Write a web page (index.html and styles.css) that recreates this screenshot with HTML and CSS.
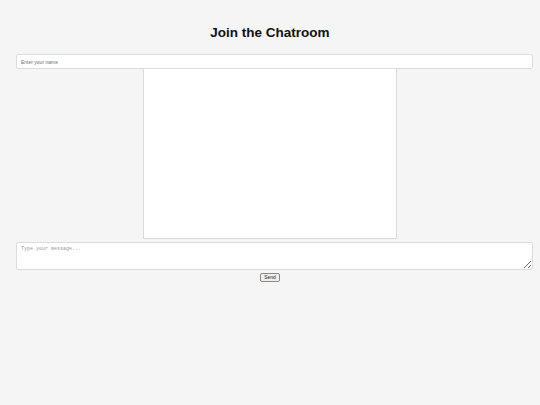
FILE: index.html
```html
<!DOCTYPE html>
<html>
<head>
<meta charset="utf-8">
<link rel="stylesheet" href="styles.css">
</head>
<body>
<div class="page">
  <h1 class="title">Join the Chatroom</h1>
  <input class="name" type="text" placeholder="Enter your name">
  <div class="chat"></div>
  <textarea class="msg" placeholder="Type your message..."></textarea>
  <div class="actions"><button class="send">Send</button></div>
</div>
</body>
</html>
```
FILE: styles.css
```css
html, body {
  margin: 0;
  padding: 0;
  background: #f5f5f5;
  font-family: "Liberation Sans", Arial, sans-serif;
}
.page {
  padding: 0 16px;
  display: flex;
  flex-direction: column;
  align-items: flex-start;
}
.title {
  align-self: stretch;
  margin: 25px 0 0;
  height: 29px;
  font-size: 13.5px;
  line-height: 16px;
  text-align: center;
  color: #111;
  font-weight: bold;
}
.name {
  box-sizing: border-box;
  width: calc(100% + 9px);
  height: 15px;
  margin: 0;
  padding: 0 4px;
  border: 1px solid #dcdcdc;
  border-radius: 2px;
  background: #fff;
  font-family: "Liberation Sans", Arial, sans-serif;
  font-size: 5px;
  outline: none;
}
.name::placeholder { color: #6f6f6f; }
.chat {
  box-sizing: border-box;
  align-self: center;
  width: 254px;
  height: 169.5px;
  background: #fff;
  border: 1px solid #dadada;
  border-top: none;
}
.msg {
  box-sizing: border-box;
  display: block;
  width: calc(100% + 9px);
  height: 28px;
  margin: 3.5px 0 0;
  padding: 3px 4px;
  border: 1px solid #dcdcdc;
  border-radius: 2px;
  background: #fff;
  font-family: "Liberation Mono", "Courier New", monospace;
  font-size: 5px;
  outline: none;
}
.msg::placeholder { color: #999; }
.actions {
  align-self: stretch;
  display: flex;
  justify-content: center;
  margin: 2.5px 0 0;
}
.send {
  box-sizing: border-box;
  width: 20px;
  height: 9px;
  margin: 0;
  padding: 0;
  border: 1px solid #888;
  border-radius: 2px;
  background: #efefef;
  font-family: "Liberation Sans", Arial, sans-serif;
  font-size: 5px;
  line-height: 7px;
  color: #222;
}
```
